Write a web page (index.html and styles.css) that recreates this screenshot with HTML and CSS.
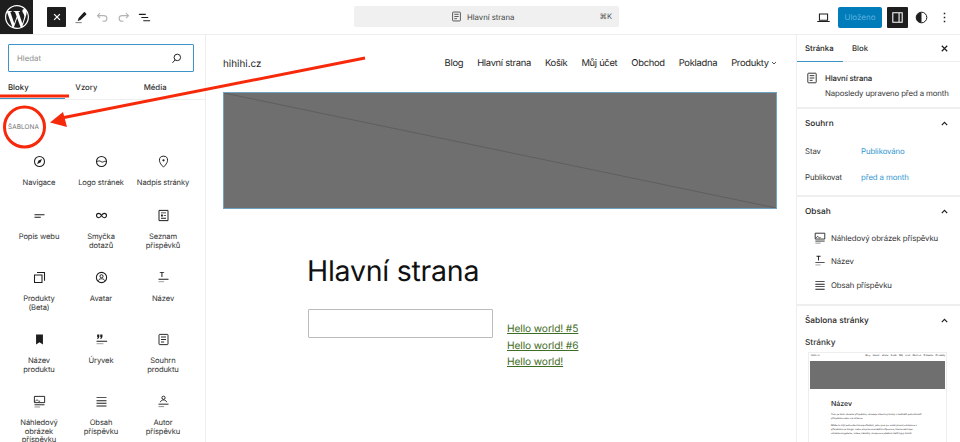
FILE: index.html
```html
<!DOCTYPE html>
<html lang="cs">
<head>
<meta charset="utf-8">
<title>Hlavní strana</title>
<link rel="stylesheet" href="styles.css">
</head>
<body>
<div class="app">
  <header class="topbar">
    <div class="tb-left">
      <div class="wp"><svg viewBox="0 0 24 24" width="24" height="24"><path fill="#fff" d="M21.469 6.825c.84 1.537 1.318 3.3 1.318 5.175 0 3.979-2.156 7.456-5.363 9.325l3.295-9.527c.615-1.54.82-2.771.82-3.864 0-.405-.026-.78-.07-1.11m-7.981.105c.647-.03 1.232-.105 1.232-.105.582-.075.514-.93-.067-.899 0 0-1.755.135-2.88.135-1.064 0-2.85-.15-2.85-.15-.585-.03-.661.855-.075.885 0 0 .54.061 1.125.09l1.68 4.605-2.37 7.08L5.354 6.9c.649-.03 1.234-.1 1.234-.1.585-.075.516-.93-.065-.896 0 0-1.746.138-2.874.138-.2 0-.438-.008-.69-.015C4.911 3.15 8.235 1.215 12 1.215c2.809 0 5.365 1.072 7.286 2.833-.046-.003-.091-.009-.141-.009-1.06 0-1.812.923-1.812 1.914 0 .89.513 1.643 1.06 2.531.411.72.89 1.643.89 2.977 0 .915-.354 1.994-.821 3.479l-1.075 3.585-3.9-11.61.001.014zM12 22.784c-1.059 0-2.081-.153-3.048-.437l3.237-9.406 3.315 9.087c.024.053.05.101.078.149-1.12.393-2.325.609-3.582.609M1.211 12c0-1.564.336-3.05.935-4.39L7.29 21.709C3.694 19.96 1.212 16.271 1.211 12M12 0C5.385 0 0 5.385 0 12s5.385 12 12 12 12-5.385 12-12S18.615 0 12 0"/></svg></div>
      <div class="tool-dark"><svg viewBox="0 0 24 24" width="10" height="10"><path d="M5 5l14 14M19 5L5 19" stroke="#fff" stroke-width="3" fill="none"/></svg></div>
      <svg class="tool tool-pen" viewBox="0 0 24 24" width="15" height="15"><path fill="#1e1e1e" d="M19 3.5l2 2c.6.6.6 1.4 0 2L12 16l-4.5 1.5L9 12.800l8-8.800c.6-.7 1.400-1 2-.5z"/><path fill="#777" d="M4 19.500h10V21H4z"/></svg>
      <svg class="tool tool-undo" viewBox="0 0 24 24" width="15" height="15"><path d="M8 5l-4 4 4 4M4 9h10c3 0 5 2 5 4.500S17 18 14 18h-2" stroke="#b4b4b4" stroke-width="1.800" fill="none"/></svg>
      <svg class="tool tool-redo" viewBox="0 0 24 24" width="15" height="15"><path d="M16 5l4 4-4 4M20 9H10c-3 0-5 2-5 4.500S7 18 10 18h2" stroke="#b4b4b4" stroke-width="1.800" fill="none"/></svg>
      <svg class="tool tool-list" viewBox="0 0 24 24" width="15" height="15"><path fill="#1e1e1e" d="M3 6h11v1.800H3zM7 11.100h11v1.800H7zM10 16.200h11V18H10z"/></svg>
    </div>
    <div class="command">
      <svg viewBox="0 0 24 24" width="13" height="13"><path d="M6 3.800h12c.7 0 1.200.5 1.200 1.200v14c0 .7-.5 1.200-1.200 1.200H6c-.7 0-1.200-.5-1.200-1.200V5c0-.7.5-1.200 1.200-1.200zM8 8h8M8 12h8M8 16h5" stroke="#3a3a3a" stroke-width="1.500" fill="none"/></svg>
      <span class="command-title">Hlavní strana</span>
      <span class="command-key">⌘K</span>
    </div>
    <div class="tb-right">
      <svg class="device" viewBox="0 0 24 24" width="15" height="15"><path d="M5.500 6.500h13v10h-13zM2 18.500h20" stroke="#1e1e1e" stroke-width="1.700" fill="none"/></svg>
      <div class="saved">Uloženo</div>
      <div class="panel-btn"><svg viewBox="0 0 24 24" width="15" height="15"><path d="M4.500 4.500h15v15h-15zM14.500 4.500v15" stroke="#fff" stroke-width="1.700" fill="none"/></svg></div>
      <svg class="contrast" viewBox="0 0 24 24" width="15" height="15"><circle cx="12" cy="12" r="8.500" stroke="#1e1e1e" stroke-width="1.600" fill="none"/><path fill="#1e1e1e" d="M12 3.500a8.500 8.500 0 0 0 0 17z"/></svg>
      <svg class="dots" viewBox="0 0 24 24" width="15" height="15"><path fill="#1e1e1e" d="M10.800 4.500h2.400v2.400h-2.400zM10.800 10.800h2.400v2.400h-2.400zM10.800 17.100h2.400v2.400h-2.400z"/></svg>
    </div>
  </header>

  <aside class="inserter">
    <div class="search">
      <span class="search-text">Hledat</span>
      <svg viewBox="0 0 24 24" width="13" height="13"><circle cx="13.500" cy="10" r="6" stroke="#1e1e1e" stroke-width="1.800" fill="none"/><path d="M9.500 14.500L4.500 20" stroke="#1e1e1e" stroke-width="1.800"/></svg>
    </div>
    <nav class="ins-tabs">
      <span class="ins-tab ins-tab-active">Bloky</span>
      <span class="ins-tab">Vzory</span>
      <span class="ins-tab">Média</span>
    </nav>
    <h2 class="cat">ŠABLONA</h2>
    <div class="blocks">
      <div class="block"><svg viewBox="0 0 24 24"><circle cx="12" cy="12" r="8" stroke="#1e1e1e" stroke-width="1.700" fill="none"/><path fill="#1e1e1e" d="M16 8l-2.500 5.500L8 16l2.500-5.500z"/></svg><span>Navigace</span></div>
      <div class="block"><svg viewBox="0 0 24 24"><circle cx="12" cy="12" r="8" stroke="#1e1e1e" stroke-width="1.700" fill="none"/><path d="M4 12.500c2-1 4-2 6-1s3 2 5 1 3-1 5-.5" stroke="#1e1e1e" stroke-width="1.600" fill="none"/></svg><span>Logo stránek</span></div>
      <div class="block"><svg viewBox="0 0 24 24"><path d="M12 21s-6.500-6-6.500-11a6.500 6.500 0 0 1 13 0c0 5-6.500 11-6.500 11z" stroke="#1e1e1e" stroke-width="1.600" fill="none"/><circle cx="12" cy="10" r="1.800" fill="#1e1e1e"/></svg><span>Nadpis stránky</span></div>

      <div class="block"><svg viewBox="0 0 24 24"><path fill="#1e1e1e" d="M4 10h16v1.700H4zM4 14h10v1.700H4z"/></svg><span>Popis webu</span></div>
      <div class="block"><svg viewBox="0 0 24 24"><path d="M12 12c-1.500-2.500-3-3.500-4.500-3.500a3.500 3.500 0 0 0 0 7C9 15.500 10.500 14.500 12 12c1.500-2.500 3-3.500 4.500-3.500a3.500 3.500 0 0 1 0 7C15 15.500 13.500 14.500 12 12z" stroke="#1e1e1e" stroke-width="1.800" fill="none"/></svg><span>Smyčka<br>dotazů</span></div>
      <div class="block"><svg viewBox="0 0 24 24"><path d="M4.800 3.800h14.400v16.400H4.800z" stroke="#1e1e1e" stroke-width="1.600" fill="none"/><path fill="#1e1e1e" d="M8 7h8v1.500H8zM8 10.500h3v3H8zM12.500 11H16v1.500h-3.500zM8 15.500h8V17H8z"/></svg><span>Seznam<br>příspěvků</span></div>

      <div class="block"><svg viewBox="0 0 24 24"><path d="M8 4h12v13M4 8h12v12H4z" stroke="#1e1e1e" stroke-width="1.700" fill="none"/></svg><span>Produkty<br>(Beta)</span></div>
      <div class="block"><svg viewBox="0 0 24 24"><circle cx="12" cy="12" r="8.200" stroke="#1e1e1e" stroke-width="1.700" fill="none"/><circle cx="12" cy="10" r="2.500" stroke="#1e1e1e" stroke-width="1.600" fill="none"/><path d="M7 17c1-2.500 3-3 5-3s4 .5 5 3" stroke="#1e1e1e" stroke-width="1.600" fill="none"/></svg><span>Avatar</span></div>
      <div class="block"><svg viewBox="0 0 24 24"><path fill="#1e1e1e" d="M6 3h7v1.500h-2.700V11H8.700V4.500H6zM4 14h16v1.500H4z"/><path fill="#999" d="M4 18h9v1.500H4z"/></svg><span>Název</span></div>

      <div class="block"><svg viewBox="0 0 24 24"><path fill="#1e1e1e" d="M6.500 4h11v16l-5.500-3.500L6.500 20z"/></svg><span>Název<br>produktu</span></div>
      <div class="block"><svg viewBox="0 0 24 24"><path fill="#1e1e1e" d="M5 4h3.500v4L6.500 11H5l1-3H5zM10 4h3.500v4l-2 3H10l1-3h-1zM4 14h17v1.500H4z"/><path fill="#999" d="M4 18h11v1.500H4z"/></svg><span>Úryvek</span></div>
      <div class="block"><svg viewBox="0 0 24 24"><path d="M5.800 3.800h12.400c.6 0 1 .4 1 1v14.400c0 .6-.4 1-1 1H5.800c-.6 0-1-.4-1-1V4.800c0-.6.4-1 1-1zM8 8h8M8 12h8M8 16h5" stroke="#1e1e1e" stroke-width="1.500" fill="none"/></svg><span>Souhrn<br>produktu</span></div>

      <div class="block"><svg viewBox="0 0 24 24"><path d="M3.800 3.800h16.400v10H3.800z" stroke="#1e1e1e" stroke-width="1.500" fill="none"/><path d="M5 12l3-3 3 3 2-1" stroke="#1e1e1e" stroke-width="1.300" fill="none"/><path fill="#1e1e1e" d="M4 16.500h16V18H4z"/><path fill="#888" d="M4 20h9v1.500H4z"/></svg><span>Náhledový<br>obrázek<br>příspěvku</span></div>
      <div class="block"><svg viewBox="0 0 24 24"><path fill="#1e1e1e" d="M4 5h16v1.500H4zM4 10h16v1.500H4zM4 14h16v1.500H4zM4 18.500h16V20H4z"/></svg><span>Obsah<br>příspěvku</span></div>
      <div class="block"><svg viewBox="0 0 24 24"><circle cx="12" cy="6" r="2.600" stroke="#1e1e1e" stroke-width="1.500" fill="none"/><path d="M7 13c.5-2.500 3-3.500 5-3.500s4.500 1 5 3.500" stroke="#1e1e1e" stroke-width="1.500" fill="none"/><path fill="#1e1e1e" d="M4 15.500h16V17H4z"/><path fill="#888" d="M4 19.500h9V21H4z"/></svg><span>Autor<br>příspěvku</span></div>
    </div>
  </aside>

  <main class="canvas">
    <div class="site-head">
      <span class="site-title">hihihi.cz</span>
      <nav class="site-nav">
        <span>Blog</span><span>Hlavní strana</span><span>Košík</span><span>Můj účet</span><span>Obchod</span><span>Pokladna</span>
        <span class="has-sub">Produkty <svg viewBox="0 0 12 12" width="6" height="6"><path d="M2 4l4 4 4-4" stroke="#1e1e1e" stroke-width="1.500" fill="none"/></svg></span>
      </nav>
    </div>
    <div class="cover">
      <svg class="cover-line" viewBox="0 0 554 117" preserveAspectRatio="none"><path d="M0 0L554 117" stroke="#5e5e5e" stroke-width="1" fill="none"/></svg>
    </div>
    <div class="article">
      <h1 class="page-title">Hlavní strana</h1>
      <div class="columns">
        <div class="empty-box"></div>
        <ul class="links">
          <li><a href="#">Hello world! #5</a></li>
          <li><a href="#">Hello world! #6</a></li>
          <li><a href="#">Hello world!</a></li>
        </ul>
      </div>
    </div>
  </main>

  <aside class="settings">
    <div class="set-tabs">
      <span class="set-tab set-tab-active">Stránka</span>
      <span class="set-tab">Blok</span>
      <svg class="set-close" viewBox="0 0 24 24" width="13" height="13"><path d="M7 7l10 10M17 7L7 17" stroke="#1e1e1e" stroke-width="2.200" fill="none"/></svg>
    </div>
    <section class="doc">
      <svg viewBox="0 0 24 24" width="14" height="14"><path d="M5.800 3.800h12.400c.6 0 1 .4 1 1v14.400c0 .6-.4 1-1 1H5.800c-.6 0-1-.4-1-1V4.800c0-.6.4-1 1-1zM8 8h8M8 12h8M8 16h5" stroke="#1e1e1e" stroke-width="1.500" fill="none"/></svg>
      <div class="doc-text">
        <div class="doc-title">Hlavní strana</div>
        <div class="doc-sub">Naposledy upraveno před a month</div>
      </div>
    </section>
    <section class="panel panel-summary">
      <div class="panel-head"><span>Souhrn</span><svg viewBox="0 0 24 24" width="13" height="13"><path d="M7 15l5-5 5 5" stroke="#1e1e1e" stroke-width="2.200" fill="none"/></svg></div>
      <div class="kv"><span class="k">Stav</span><span class="v">Publikováno</span></div>
      <div class="kv"><span class="k">Publikovat</span><span class="v">před a month</span></div>
    </section>
    <section class="panel panel-content">
      <div class="panel-head"><span>Obsah</span><svg viewBox="0 0 24 24" width="13" height="13"><path d="M7 15l5-5 5 5" stroke="#1e1e1e" stroke-width="2.200" fill="none"/></svg></div>
      <div class="outline">
        <div class="out-item"><svg viewBox="0 0 24 24"><path d="M3.800 3.800h16.400v10H3.800z" stroke="#1e1e1e" stroke-width="1.500" fill="none"/><path d="M5 12l3-3 3 3 2-1" stroke="#1e1e1e" stroke-width="1.300" fill="none"/><path fill="#1e1e1e" d="M4 16.500h16V18H4z"/><path fill="#888" d="M4 20h9v1.500H4z"/></svg><span>Náhledový obrázek příspěvku</span></div>
        <div class="out-item"><svg viewBox="0 0 24 24"><path fill="#1e1e1e" d="M6 3h7v1.500h-2.700V11H8.700V4.500H6zM4 14h16v1.500H4z"/><path fill="#999" d="M4 18h9v1.500H4z"/></svg><span>Název</span></div>
        <div class="out-item"><svg viewBox="0 0 24 24"><path fill="#1e1e1e" d="M4 5h16v1.500H4zM4 10h16v1.500H4zM4 14h16v1.500H4zM4 18.500h16V20H4z"/></svg><span>Obsah příspěvku</span></div>
      </div>
    </section>
    <section class="panel panel-template">
      <div class="panel-head"><span>Šablona stránky</span><svg viewBox="0 0 24 24" width="13" height="13"><path d="M7 15l5-5 5 5" stroke="#1e1e1e" stroke-width="2.200" fill="none"/></svg></div>
      <div class="tpl-label">Stránky</div>
      <div class="thumb">
        <div class="th-head"><span>hihihi.cz</span><span class="th-nav">Blog Hlavní strana Košík Můj účet Obchod Pokladna Produkty</span></div>
        <div class="th-cover"></div>
        <div class="th-body">
          <div class="th-title">Název</div>
          <p>Toto je blok obsahu příspěvku, obsauje všechny bloky v každém jednotlivém příspěvku nebo na stránce.</p>
          <p>Může to být jednoduchá uspořádání, jako jsou po sobě jdoucí odstavce v příspěvku na blogu, nebo propracovanější kompozice, které zahrnuje obrázkové galerie, videa, tabulky, sloupce a jakékoli další typy bloků.</p>
        </div>
      </div>
    </section>
  </aside>
</div>
<svg class="annot" viewBox="0 0 960 442" width="960" height="442">
  <path d="M365 58L64 117.500" stroke="#f7290b" stroke-width="3" fill="none"/>
  <path fill="#f7290b" d="M50 122.500L63 112L67 127z"/>
  <path d="M0 96H69" stroke="#f7290b" stroke-width="3" fill="none"/>
  <circle cx="24.500" cy="127" r="20" stroke="#f7290b" stroke-width="3" fill="none"/>
</svg>
</body>
</html>
```
FILE: styles.css
```css
* { box-sizing: border-box; }
html, body { margin: 0; padding: 0; }
body {
  width: 960px; height: 442px; overflow: hidden; position: relative;
  background: #fff; color: #1e1e1e;
  font-family: Inter, "Liberation Sans", sans-serif;
  text-rendering: geometricPrecision;
}
.app {
  display: grid; width: 960px; height: 442px;
  grid-template-columns: 206px 590px 164px;
  grid-template-rows: 35px 407px;
}
.topbar {
  grid-column: 1 / 4; display: flex; align-items: flex-start;
  border-bottom: 1px solid #eee; position: relative;
}
.tb-left { display: flex; align-items: center; height: 34px; width: 354px; flex: none; }
.wp { width: 33px; height: 34px; background: #1e1e1e; display: flex; align-items: center; justify-content: center; }
.tool-dark { width: 19px; height: 20px; margin-left: 14px; background: #1e1e1e; border-radius: 1px; display: flex; align-items: center; justify-content: center; }
.tool { flex: none; }
.tool-pen { margin-left: 7px; }
.tool-undo { margin-left: 7px; }
.tool-redo { margin-left: 6px; }
.tool-list { margin-left: 6px; }
.command {
  width: 265px; height: 21px; margin-top: 6px; flex: none;
  background: #f0f0f0; border-radius: 2px; position: relative;
  display: flex; align-items: center; padding-left: 96px; gap: 4px;
  font-size: 7.800px; letter-spacing: -.05px; color: #444;
}
.command-key { position: absolute; right: 7px; font-size: 7.500px; color: #555; }
.tb-right { display: flex; align-items: center; height: 34px; flex: 1; padding-left: 197px; }
.saved {
  width: 44px; height: 21px; margin-left: 7px; background: #007cba; border-radius: 2px;
  color: #5fb2dd; font-size: 8px; display: flex; align-items: center; justify-content: center;
}
.panel-btn { width: 21px; height: 21px; margin-left: 5px; background: #1e1e1e; border-radius: 1px; display: flex; align-items: center; justify-content: center; }
.contrast { margin-left: 6px; }
.dots { margin-left: 8px; }

.inserter { border-right: 1px solid #eee; overflow: hidden; }
.search {
  margin: 9px 11px 0 8px; height: 28px; border: 1.500px solid #3d94c8; border-radius: 1px;
  display: flex; align-items: center; justify-content: space-between; padding: 0 10px 0 8px;
}
.search-text { font-size: 7.800px; color: #8a8a8a; }
.ins-tabs { display: flex; height: 28px; border-bottom: 1px solid #eee; }
.ins-tab { width: 69px; padding: 10px 0 0 7px; font-size: 7.800px; font-weight: 500; color: #333; }
.ins-tab-active { color: #1e1e1e; border-bottom: 1.500px solid #3d94c8; width: 66px; margin-right: 3px; padding-left: 8px; }
.cat { margin: 23px 0 0 8px; font-size: 6.400px; line-height: 9px; font-weight: 400; color: #757575; letter-spacing: .1px; }
.blocks {
  display: grid; grid-template-columns: repeat(3, 62px); margin: 22px 0 0 8px;
  grid-template-rows: 54px 62px 62px 62px 62px;
}
.block { display: flex; flex-direction: column; align-items: center; font-size: 7.600px; letter-spacing: -.1px; line-height: 8.400px; color: #333; text-align: center; }
.block svg { width: 15px; height: 15px; margin-bottom: 10.400px; flex: none; }
.block span { display: block; white-space: nowrap; }

.canvas { padding: 0 19px 0 17px; overflow: hidden; }
.site-head { display: flex; justify-content: space-between; align-items: center; height: 57px; }
.site-title { font-size: 9.900px; }
.site-nav { display: flex; gap: 14px; font-size: 9.400px; letter-spacing: -.3px; }
.cover { height: 117px; background: #6f6f6f; border: 1px solid #6fa3c1; }
.cover-line { display: block; width: 100%; height: 100%; }
.article { padding-left: 85px; }
.page-title { margin: 44px 0 0 -1px; font-size: 28.500px; line-height: 36px; font-weight: 400; letter-spacing: -.25px; color: #111; }
.columns { display: flex; gap: 14px; margin-top: 20px; }
.empty-box { width: 185px; height: 29px; border: 1px solid #bbb; border-radius: 1px; flex: none; }
.links { list-style: none; margin: 12px 0 0; padding: 0; font-size: 10.200px; letter-spacing: -.1px; line-height: 16.500px; }
.links a { color: #3f6c24; }

.settings { border-left: 1px solid #eee; overflow: hidden; }
.set-tabs { display: flex; align-items: center; height: 27px; border-bottom: 1px solid #eee; font-size: 7.800px; }
.set-tab { padding: 0 10px 0 8px; height: 27px; line-height: 27px; font-weight: 500; color: #333; }
.set-tab-active { border-bottom: 1.500px solid #3d94c8; color: #1e1e1e; width: 46px; margin-right: 1px; }
.set-close { margin-left: auto; margin-right: 9px; }
.doc { display: flex; gap: 6px; padding: 9px 0 0 8px; height: 47px; border-bottom: 2px solid #eee; font-size: 7.800px; letter-spacing: -.12px; }
.doc svg { flex: none; }
.doc-title { line-height: 14px; font-weight: 500; }
.doc-sub { line-height: 16px; color: #333; white-space: nowrap; }
.panel { border-bottom: 2px solid #eee; padding: 0 9px 0 8px; font-size: 7.800px; letter-spacing: -.1px; }
.panel-head { display: flex; justify-content: space-between; align-items: center; height: 29px; font-size: 8.300px; letter-spacing: 0; font-weight: 500; }
.panel-summary { height: 88px; }
.kv { display: flex; height: 26px; align-items: center; }
.kv .k { width: 56px; color: #333; }
.kv .v { color: #2f96d0; }
.panel-content { height: 109px; }
.out-item { display: flex; align-items: center; gap: 4px; height: 23.500px; padding-left: 8px; color: #333; }
.out-item svg { width: 14px; height: 14px; flex: none; }
.panel-template { border-bottom: 0; }
.tpl-label { margin-top: 1px; height: 14px; line-height: 14px; font-size: 8.300px; letter-spacing: 0; font-weight: 500; color: #333; }
.thumb { width: 139px; margin: 2px 0 0 3px; height: 200px; border: 1px solid #eee; overflow: hidden; }
.th-head { display: flex; justify-content: space-between; font-size: 2.400px; line-height: 5px; padding: 0 1px 0 2px; height: 8px; white-space: nowrap; }
.th-nav { word-spacing: 2px; }
.th-cover { height: 28px; margin: 0 1px; background: #6f6f6f; }
.th-body { padding: 10px 22px 0 22px; font-size: 2.500px; line-height: 4px; letter-spacing: 0; }
.th-title { font-size: 7px; line-height: 10px; font-weight: 500; margin-bottom: 4px; }
.th-body p { margin: 0 0 3px; }

.annot { position: absolute; left: 0; top: 0; pointer-events: none; }
```
